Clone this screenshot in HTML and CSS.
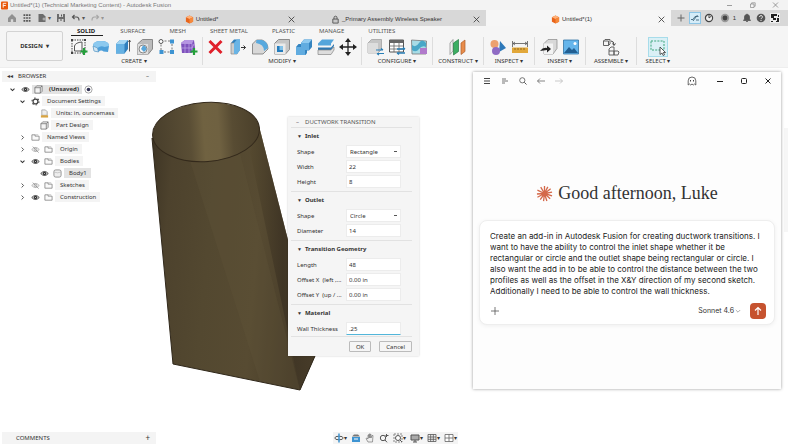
FILE: index.html
```html
<!DOCTYPE html>
<html lang="en">
<head>
  <meta charset="utf-8">
  <meta name="viewport" content="width=device-width,initial-scale=1">
  <title>Untitled*(1) - Autodesk Fusion</title>
  <link rel="stylesheet" href="styles.css">
</head>
<body>
  <!-- shared icons -->
  <svg class="defs" aria-hidden="true">
    <symbol id="close" viewBox="0 0 8 8"><path d="M1.500 1.500l5 5M6.500 1.500l-5 5" fill="none" stroke="currentColor" stroke-width=".7"/></symbol>
    <symbol id="cube" viewBox="0 0 10 10"><path d="M5 .5l4 2v5l-4 2-4-2v-5z" fill="#e8641b"/><path d="M5 .5l4 2-4 2-4-2z" fill="#ffb27a"/><path d="M5 4.500v5l4-2v-5z" fill="#f5893c"/></symbol>
    <symbol id="down" viewBox="0 0 10 10"><path d="M2.800 4L5 6.200 7.200 4" fill="none" stroke="#333" stroke-width="1.200"/></symbol>
    <symbol id="right" viewBox="0 0 10 10"><path d="M4 2.800L6.200 5 4 7.200" fill="none" stroke="#444"/></symbol>
    <symbol id="eye" viewBox="0 0 10 8"><path d="M.8 4Q5-.5 9.200 4 5 8.500.8 4z" fill="#ddd" stroke="#444"/><circle cx="5" cy="4" r="1.900" fill="#333"/><circle cx="5" cy="4" r=".6" fill="#ddd"/></symbol>
    <symbol id="eye-off" viewBox="0 0 10 8"><path d="M.8 4Q5-.5 9.200 4 5 8.500.8 4z" fill="none" stroke="#999" stroke-width=".8"/><circle cx="5" cy="4" r="1.500" fill="none" stroke="#888" stroke-width=".7"/><path d="M2 .8L8.500 7.500" stroke="#888" stroke-width=".8"/></symbol>
    <symbol id="folder" viewBox="0 0 10 8"><path d="M1 7V1h3.500v1.500H9V7z" fill="#fafafa" stroke="#777" stroke-width=".8"/><path d="M4.500 1H8" stroke="#999" stroke-width=".6"/></symbol>
    <symbol id="box" viewBox="0 0 10 10"><path d="M1 3l2-2h6v6L7 9H1zM1 3h6v6M7 3l2-2" fill="#f4f4f4" stroke="#666" stroke-width=".8"/></symbol>
  </svg>

  <header class="titlebar">
    <svg class="app-icon" viewBox="0 0 8 9"><rect width="8" height="9" rx="1" fill="#e8590c"/><path d="M2.500 7V2H6M2.500 4.500h3" stroke="#fff" fill="none"/></svg>
    <span class="app-title">Untitled*(1) (Technical Marketing Content) - Autodesk Fusion</span>
    <div class="window-buttons">
      <button aria-label="Minimize"><svg viewBox="0 0 8 8"><path d="M1.500 4.500h5" stroke="currentColor" stroke-width=".7"/></svg></button>
      <button aria-label="Restore"><svg viewBox="0 0 8 8"><path d="M2 3h3.500v3.500H2zM3.200 3V1.800h3.500v3.400H5.500" fill="none" stroke="currentColor" stroke-width=".6"/></svg></button>
      <button aria-label="Close"><svg><use href="#close"/></svg></button>
    </div>
  </header>

  <div class="tabbar">
    <div class="quick">
      <button aria-label="Home"><svg viewBox="0 0 10 10"><path d="M1 5l4-4 4 4v4H6.200V6.200H3.800V9H1z" fill="#909090"/></svg></button>
      <button aria-label="Data panel"><svg viewBox="0 0 10 10"><path d="M1.500 2.200h7M1.500 5h7M1.500 7.800h7" stroke="#555" stroke-width="1.700" stroke-dasharray="1.800 .8"/></svg></button>
      <button class="wide" aria-label="File"><svg viewBox="0 0 10 10"><path d="M1.500 1h4.500l2.500 2.500V9h-7z" fill="#6c6c6c"/><path d="M5.500 6h3M7 4.500v3" stroke="#ccc" stroke-width=".8"/></svg>▾</button>
      <button aria-label="Save"><svg viewBox="0 0 10 10"><path d="M1 1h8v8H1z" fill="#6c6c6c"/><path d="M3 1h4v3H3zM2.500 6h5v3h-5z" fill="#d5d5d5"/><path d="M5.500 1.500v2M4 7h2" stroke="#555"/></svg></button>
      <button class="wide" aria-label="Undo"><svg viewBox="0 0 10 10"><path d="M3.500 2L1.500 4l2 2M2 4h3.500Q8 4 8 7.500" fill="none" stroke="#555" stroke-width="1.200"/></svg>▾</button>
      <button class="wide faded" aria-label="Redo"><svg viewBox="0 0 10 10"><path d="M6.500 2l2 2-2 2M8 4H4.500Q2 4 2 7.500" fill="none" stroke="#777" stroke-width="1.200"/></svg>▾</button>
    </div>
    <div class="doc-tab"><div class="doc-name"><svg><use href="#cube"/></svg>Untitled*</div><button aria-label="Close tab"><svg><use href="#close"/></svg></button></div>
    <div class="doc-tab"><div class="doc-name"><svg viewBox="0 0 10 10"><path d="M2 4.500h6V9H2zM3.300 4.500V3a1.700 1.700 0 013.400 0v1.500" fill="#c8c8c8" stroke="#555"/></svg>_Primary Assembly Wireless Speaker</div><button aria-label="Close tab"><svg><use href="#close"/></svg></button></div>
    <div class="doc-tab active"><div class="doc-name"><svg><use href="#cube"/></svg>Untitled*(1)</div><button aria-label="Close tab"><svg><use href="#close"/></svg></button></div>
    <div class="status">
      <button aria-label="New tab"><svg viewBox="0 0 10 10"><path d="M5 1.500v7M1.500 5h7" stroke="#666"/></svg></button>
      <button class="on" aria-label="Online"><svg viewBox="0 0 10 10"><path d="M1 6.500h2l2-3h3.500M3 8l4.500-6M6 7h3" fill="none" stroke="#42657a" stroke-width=".9"/></svg></button>
      <button aria-label="Extensions"><svg viewBox="0 0 10 10"><circle cx="5" cy="5" r="3.600" fill="#eee" stroke="#444" stroke-width="1.200"/><path d="M5 5V2M5 5l2.500-2" stroke="#444"/></svg></button>
      <button class="count" aria-label="Jobs"><svg viewBox="0 0 10 10"><circle cx="5" cy="5" r="4.200" fill="#999"/><circle cx="5" cy="5" r="2.400" fill="#444"/></svg>1</button>
      <button aria-label="Notifications"><svg viewBox="0 0 10 10"><path d="M1.500 7.500L2.500 6V4a2.500 2.500 0 015 0v2l1 1.500zM4 8.500h2M5 .7V2" fill="#555" stroke="#555" stroke-width=".8"/></svg></button>
      <button aria-label="Help"><svg viewBox="0 0 10 10"><circle cx="5" cy="5" r="4.300" fill="#555"/><path d="M3.600 4a1.400 1.400 0 112 1.200Q5 5.500 5 6.100M5 7v1" fill="none" stroke="#eee"/></svg></button>
      <button aria-label="Account"><svg viewBox="0 0 10 10"><path d="M0 0h10v10H0z" fill="#eee"/><path d="M1 1h6v2H4v2h2v2H3V5H1zM7 5h2v4H6V8h1zM8 2h1v2H8zM1 8h2v1H1z" fill="#222"/></svg></button>
    </div>
  </div>

  <div class="ribbon">
    <button class="workspace">DESIGN <span>▾</span></button>
    <div class="tools">
      <nav class="ribbon-tabs">
        <a class="current" href="#">SOLID</a><a href="#">SURFACE</a><a href="#">MESH</a><a href="#">SHEET METAL</a><a href="#">PLASTIC</a><a href="#">MANAGE</a><a href="#">UTILITIES</a>
      </nav>
      <div class="groups">
        <div class="group">
          <div class="icons">
            <svg viewBox="0 0 18 18"><path d="M2 2h13v13H2z" fill="#f8f8f8" stroke="#444" stroke-dasharray="1.500 1"/><path d="M4.500 13V8q1-3.500 7.500-4v9z" fill="none" stroke="#555"/><path d="M1 1h2v2H1zM14 1h2v2h-2zM1 14h2v2H1z" fill="#444"/><path d="M14 10v7M10.500 13.500h7" stroke="#23a03a" stroke-width="2.200"/></svg>
            <svg viewBox="0 0 18 18"><path d="M1 8Q1 3 9 3t8 5l-1 6-4.500-.5Q9 11.500 6.500 14L2 13z" fill="#4e9fd9"/><path d="M1 8Q1 3 9 3t8 5l-4.500 1Q9 7 5.500 10z" fill="#8cc9ef"/><path d="M1 8l1 5 4.500 1-1-4z" fill="#d4e6f2" stroke="#5a9ac5" stroke-width=".7"/></svg>
            <svg viewBox="0 0 18 18"><path d="M2 6l4-4h8v9l-3.500 4.500H2z" fill="#2f7fbd"/><path d="M2 6h8.500v9.500H2z" fill="#65b1e3"/><path d="M2 6l4-4h8l-3.500 4z" fill="#a4d6f3"/><path d="M15.500 2.500v11M14.500 4l1-2 1 2" fill="none" stroke="#333" stroke-width=".8"/></svg>
            <svg viewBox="0 0 18 18"><path d="M1.500 6l5-4.500h10V11L12 16.500H1.500z" fill="#bbb" stroke="#888"/><path d="M1.500 6H12v10.500H1.500z" fill="#dedede"/><circle cx="7" cy="11" r="4" fill="#f7f7f7" stroke="#888"/><path d="M7 7.500q3.500.5 3.500 4L8 14l-3-3z" fill="#58a7db"/></svg>
            <svg viewBox="0 0 18 18"><path d="M3 3h11v11H3z" fill="none" stroke="#777" stroke-dasharray="2 1.500"/><circle cx="3" cy="3.500" r="2" fill="#fff" stroke="#555"/><path d="M12 1.500h4v4h-4zM1.500 12h4v4h-4zM12 12h4v4h-4z" fill="#3e94d2"/></svg>
            <svg viewBox="0 0 18 18"><path d="M1 5l4-3h9l1 8-3 5H2z" fill="#7f52bd"/><path d="M1 5l4-3h9l-2 3.500z" fill="#b695e2"/><path d="M1 5.500h11v9M5 5.500V15M9 5.500V15M1.500 10H12l2-4" fill="none" stroke="#c3a9e8" stroke-width=".7"/><path d="M14 10v7M10.500 13.500h7" stroke="#23a03a" stroke-width="2.200"/></svg>
          </div>
          <span>CREATE ▾</span>
        </div>
        <div class="group">
          <div class="icons">
            <svg viewBox="0 0 18 18"><path d="M2.500 3l12 12M14.500 3l-12 12" stroke="#e0202a" stroke-width="3"/></svg>
            <svg viewBox="0 0 18 18"><path d="M2 5l3-3.500h6V12l-3 4H2z" fill="#2f80bd"/><path d="M2 5h6v11H2z" fill="#ccc" stroke="#888" stroke-width=".7"/><path d="M5 5l3-3.500h3V12l-3 4H5z" fill="#69b4e5"/><path d="M12 9.500h4.500M14.500 7.500l2 2-2 2" fill="none" stroke="#333"/></svg>
            <svg viewBox="0 0 18 18"><path d="M1.500 6l4-4H11q6 2 6 9l-5 5H1.500z" fill="#d8d8d8" stroke="#777" stroke-width=".8"/><path d="M5.500 2H11q6 2 6 8l-4 3Q13 6 5 5z" fill="#58a9de"/></svg>
            <svg viewBox="0 0 18 18"><path d="M1.500 5.500l4-4h11v10l-4 4.500h-11z" fill="#c6c6c6" stroke="#777" stroke-width=".8"/><path d="M1.500 5.500h11V16h-11z" fill="#eaeaea"/><path d="M4 8h6v6H4z" fill="#83c2e9"/><path d="M4 8h2.500v4H10v2H4z" fill="#267dbd"/></svg>
            <svg viewBox="0 0 18 18"><path d="M6 5l3-3.500h8V9l-3 3.500h-2V15l-1.500 2H1V9l2.500-3H6z" fill="#3484c0"/><path d="M1 9h5V5h8v7h-4v5H1z" fill="#61ace0"/><path d="M6 5l3-3.500h8L14 5z" fill="#8fcaf0"/></svg>
            <svg viewBox="0 0 18 18"><path d="M1 5.500l4-4h12l-3 4v2H1z" fill="#54a5db"/><path d="M1 9.500h13L17 6v2l-3 4H1z" fill="#2f78b1"/><path d="M1 12h13l3-3v3l-3 4.500H1z" fill="#ddd" stroke="#888" stroke-width=".7"/></svg>
            <svg viewBox="0 0 18 18"><path d="M9 2v14M2 9h14" stroke="#222" stroke-width="1.300"/><path d="M9 0l3 4H6zM9 18l3-4H6zM0 9l4-3v6zM18 9l-4-3v6z" fill="#222"/></svg>
          </div>
          <span>MODIFY ▾</span>
        </div>
        <div class="group">
          <div class="icons">
            <svg viewBox="0 0 18 18"><path d="M2 5l3.500-3.500h10v10L12 15H2z" fill="#c5c5c5" stroke="#999" stroke-width=".7"/><path d="M2 5h10v10H2z" fill="#ddd"/><path d="M10 12h7M15 10.500l2 1.500M18 15.500h-7M13 17l-2-1.500" stroke="#287fb7" stroke-width="1.200"/></svg>
            <svg viewBox="0 0 18 18"><path d="M1.500 2h14v12h-14z" fill="#fff" stroke="#555"/><path d="M1.500 2h14v3h-14z" fill="#666"/><path d="M1.500 8h14M1.500 11h14M6 5v9M11 5v9" stroke="#666" stroke-width=".8"/><path d="M9 11h8M15 9.500l2 1.500M17 15H9M11 16.500L9 15" stroke="#287fb7" stroke-width="1.300"/></svg>
            <svg viewBox="0 0 18 18"><path d="M1.500 2l15 1-.5 13H2z" fill="#a7dce6" stroke="#777" stroke-width=".8"/><path d="M2 7q4 3 7-2t7 0v4q-4-2-7 2t-7 1z" fill="#49a7c7"/><path d="M10 10h7v6h-7z" fill="#b17acb"/></svg>
          </div>
          <span>CONFIGURE ▾</span>
        </div>
        <div class="group">
          <div class="icons">
            <svg viewBox="0 0 18 18"><path d="M1 5l3-3.500V13l-3 3.500z" fill="#eee" stroke="#888" stroke-width=".7"/><path d="M4.500 5l5-3.500v12l-5 3.500z" fill="#3cae63" stroke="#257b43" stroke-width=".7"/><path d="M12 5l4-3v11.500L12 16.500z" fill="#e98c4a" stroke="#ae5f2b" stroke-width=".7"/></svg>
          </div>
          <span>CONSTRUCT ▾</span>
        </div>
        <div class="group">
          <div class="icons">
            <svg viewBox="0 0 18 18"><path d="M11 3l6 7-7 4z" fill="#2d78b9"/><circle cx="5.500" cy="6" r="4" fill="#eda16f"/><circle cx="7" cy="13" r="4" fill="#8f6bc4"/></svg>
            <svg viewBox="0 0 18 18"><path d="M1.500 3v6M16.500 3v6M2 5.500h14M4 4L2 5.500 4 7M14 4l2 1.500L14 7" fill="none" stroke="#555" stroke-width=".8"/><path d="M1 9.500h16V15H1z" fill="#e2a83a"/><path d="M4 10v2M7 10v2M10 10v2M13 10v2" stroke="#7f5b1c" stroke-width=".8"/></svg>
          </div>
          <span>INSPECT ▾</span>
        </div>
        <div class="group">
          <div class="icons">
            <svg viewBox="0 0 18 18"><path d="M4 5.500l4-4h9v9L13 16H4z" fill="#d8d8d8" stroke="#888" stroke-width=".7"/><path d="M4 5.500h9V16H4z" fill="#f3f3f3"/><path d="M0 13q3-4 7-3V7.500l4 3.500-4 3.500V12z" fill="#222"/></svg>
            <svg viewBox="0 0 18 18"><path d="M1.500 2h15v14h-15z" fill="#65b5eb" stroke="#3274a5" stroke-width=".8"/><path d="M2 15l5-6 3 3 2-2 4 5z" fill="#225f92"/><circle cx="13" cy="5.500" r="1.500" fill="#fff"/></svg>
          </div>
          <span>INSERT ▾</span>
        </div>
        <div class="group">
          <div class="icons">
            <svg viewBox="0 0 18 18"><path d="M1.500 3l1.500-1.500h5V6L6.500 7.500h-5zM1.500 3h5v4.500M7 11l2-2h3v4h4l1 1-1 3H7zM7 13h5v4M12 13v4" fill="#f5f5f5" stroke="#555" stroke-width=".9"/><path d="M9 3q3 0 3 4M10.500 5.500L12 7.500l1.500-2" fill="none" stroke="#444"/></svg>
          </div>
          <span>ASSEMBLE ▾</span>
        </div>
        <div class="group">
          <div class="icons">
            <svg class="selected" viewBox="0 0 18 18"><path d="M2 3h13v9H2z" fill="none" stroke="#3ca57c" stroke-dasharray="2 1.200"/><path d="M11 9v7.500l2-1.500 1.200 2.500 1.300-.7-1.200-2.300h2.200z" fill="#fff" stroke="#333" stroke-width=".8"/></svg>
          </div>
          <span>SELECT ▾</span>
        </div>
      </div>
    </div>
  </div>

  <main class="canvas">
    <!-- duct model -->
    <svg class="model" viewBox="150 100 170 292" role="img" aria-label="Duct body">
      <defs>
        <linearGradient id="wall" x1="0" y1="0" x2="1" y2=".15">
          <stop offset="0" stop-color="#3d3424"/><stop offset=".14" stop-color="#4d422d"/><stop offset=".4" stop-color="#534830"/><stop offset=".7" stop-color="#574b32"/><stop offset="1" stop-color="#463b28"/>
        </linearGradient>
        <linearGradient id="inside">
          <stop offset="0" stop-color="#483e2b"/><stop offset=".35" stop-color="#5a4e35"/><stop offset=".48" stop-color="#706241"/><stop offset=".62" stop-color="#6f6141"/><stop offset=".75" stop-color="#584c33"/><stop offset="1" stop-color="#4a3f2a"/>
        </linearGradient>
        <linearGradient id="side" x1="0" y1="0" x2="1" y2="0">
          <stop offset="0" stop-color="#55492f"/><stop offset=".5" stop-color="#3c3223"/><stop offset="1" stop-color="#473c29"/>
        </linearGradient>
      </defs>
      <path d="M152 138L173 364l127 26 15-34-27-116-29-114z" fill="url(#wall)"/>
      <path d="M190 161l50-8 60 237-40-8z" fill="#65583a" opacity=".25"/>
      <path d="M250 152l9-26 29 114 27 116-15 34z" fill="url(#side)" opacity=".8"/>
      <path d="M152 138L173 364l127 26 15-34" fill="none" stroke="#30281b"/>
      <ellipse cx="206" cy="132" rx="53.500" ry="29.500" transform="rotate(-4 206 132)" fill="url(#inside)" stroke="#33291b"/>
    </svg>

    <section class="browser">
      <h2><span>◂◂</span>BROWSER<span class="end">–</span></h2>
      <ul class="tree">
        <li class="l0"><svg><use href="#down"/></svg><svg><use href="#eye"/></svg><span class="root"><svg><use href="#box"/></svg><b>(Unsaved)</b></span><svg viewBox="0 0 10 10"><circle cx="5" cy="5" r="4" fill="#fff" stroke="#777" stroke-width=".7"/><circle cx="5" cy="5" r="2" fill="#335"/></svg></li>
        <li class="l1"><svg><use href="#down"/></svg><svg viewBox="0 0 10 10"><circle cx="5" cy="5" r="2.700" fill="none" stroke="#444" stroke-width="1.400"/><circle cx="5" cy="5" r="3.900" fill="none" stroke="#444" stroke-width="1.200" stroke-dasharray="1.700 2.380"/></svg><span>Document Settings</span></li>
        <li class="l2"><svg viewBox="0 0 10 10"><path d="M2 7V1h4l2 2v4z" fill="#eee" stroke="#888" stroke-width=".7"/><path d="M1 7h8v2.500H1z" fill="#d9a441"/></svg><span>Units: in, ouncemass</span></li>
        <li class="l2"><svg><use href="#box"/></svg><span>Part Design</span></li>
        <li class="l1"><svg><use href="#right"/></svg><svg><use href="#folder"/></svg><span>Named Views</span></li>
        <li class="l1"><svg><use href="#right"/></svg><svg><use href="#eye-off"/></svg><svg><use href="#folder"/></svg><span>Origin</span></li>
        <li class="l1"><svg><use href="#down"/></svg><svg><use href="#eye"/></svg><svg><use href="#folder"/></svg><span>Bodies</span></li>
        <li class="l2"><svg><use href="#eye"/></svg><svg viewBox="0 0 10 10"><rect x="1" y="1" width="8" height="8" rx="2" fill="#eee" stroke="#777" stroke-width=".8"/><path d="M1.500 3.500Q5 5 8.500 3.500" fill="none" stroke="#aaa" stroke-width=".6"/></svg><span class="hit">Body1</span></li>
        <li class="l1"><svg><use href="#right"/></svg><svg><use href="#eye-off"/></svg><svg><use href="#folder"/></svg><span>Sketches</span></li>
        <li class="l1"><svg><use href="#right"/></svg><svg><use href="#eye"/></svg><svg><use href="#folder"/></svg><span>Construction</span></li>
      </ul>
    </section>

    <form class="dialog">
      <h2><span>–</span>DUCTWORK TRANSITION</h2>
      <fieldset>
        <legend>Inlet</legend>
        <div class="field"><label for="in-shape">Shape</label><select id="in-shape"><option>Rectangle</option><option>Circle</option></select></div>
        <div class="field"><label for="in-width">Width</label><input id="in-width" type="text" value="22"></div>
        <div class="field"><label for="in-height">Height</label><input id="in-height" type="text" value="8"></div>
      </fieldset>
      <fieldset>
        <legend>Outlet</legend>
        <div class="field"><label for="out-shape">Shape</label><select id="out-shape"><option>Circle</option><option>Rectangle</option></select></div>
        <div class="field"><label for="out-dia">Diameter</label><input id="out-dia" type="text" value="14"></div>
      </fieldset>
      <fieldset>
        <legend>Transition Geometry</legend>
        <div class="field"><label for="len">Length</label><input id="len" type="text" value="48"></div>
        <div class="field"><label for="off-x">Offset X &nbsp;(left ,...</label><input id="off-x" type="text" value="0.00 in"></div>
        <div class="field"><label for="off-y">Offset Y &nbsp;(up / ...</label><input id="off-y" type="text" value="0.00 in"></div>
      </fieldset>
      <fieldset>
        <legend>Material</legend>
        <div class="field"><label for="wall-t">Wall Thickness</label><input id="wall-t" class="editing" type="text" value=".25"></div>
      </fieldset>
      <div class="actions"><button type="button">OK</button><button type="button">Cancel</button></div>
    </form>

    <div class="side-edge"></div>

    <section class="chat">
      <div class="chat-bar">
        <button aria-label="Menu"><svg viewBox="0 0 10 10"><path d="M2 2.500h6M2 5h6M2 7.500h6" stroke="#444"/></svg></button>
        <button aria-label="Sidebar"><svg viewBox="0 0 10 10"><path d="M2 3h4M2 5h6M2 7h3" stroke="#666" stroke-width=".9"/></svg></button>
        <button aria-label="Search"><svg viewBox="0 0 10 10"><circle cx="4.300" cy="4.300" r="2.600" fill="none" stroke="#555" stroke-width=".8"/><path d="M6.300 6.300L8.500 8.500" stroke="#555"/></svg></button>
        <button aria-label="Back"><svg viewBox="0 0 10 10"><path d="M9 5H1.500M4 2.500L1.500 5 4 7.500" fill="none" stroke="#666" stroke-width=".8"/></svg></button>
        <button aria-label="Forward"><svg viewBox="0 0 10 10"><path d="M1 5h7.500M6 2.500L8.500 5 6 7.500" fill="none" stroke="#bbb" stroke-width=".8"/></svg></button>
        <span class="spacer"></span>
        <button aria-label="Incognito"><svg viewBox="0 0 10 10"><path d="M1.200 9V4.800a3.800 3.800 0 017.600 0V9L7.500 8 6.300 9 5 8 3.700 9 2.500 8z" fill="none" stroke="#444" stroke-width=".8"/><path d="M3.500 4v1.500M6.500 4v1.500" stroke="#444"/></svg></button>
        <div class="chat-window">
          <button aria-label="Minimize"><svg viewBox="0 0 10 10"><path d="M2 5.500h6" stroke="#222"/></svg></button>
          <button aria-label="Maximize"><svg viewBox="0 0 10 10"><rect x="2.500" y="2.500" width="5" height="5" rx="1" fill="none" stroke="#222"/></svg></button>
          <button aria-label="Close"><svg viewBox="0 0 10 10"><path d="M2.500 2.500l5 5M7.500 2.500l-5 5" stroke="#222"/></svg></button>
        </div>
      </div>
      <h1>
        <svg viewBox="0 0 18 18"><path d="M9 9V1M9 9l3.500-7M9 9l6.500-5M9 9l8-1.500M9 9l8 2.500M9 9l6 5.500M9 9l2.500 8M9 9l-1 8M9 9l-4.500 6.500M9 9l-7.500 4M9 9L1 9.500M9 9L1.500 5.500M9 9L5 2.200" stroke="#d4694a" stroke-width="1.400"/></svg>
        Good afternoon, Luke
      </h1>
      <form class="composer">
        <textarea aria-label="Message" rows="6" spellcheck="false">Create an add-in in Autodesk Fusion for creating ductwork transitions. I
want to have the ability to control the inlet shape whether it be
rectangular or circle and the outlet shape being rectangular or circle. I
also want the add in to be able to control the distance between the two
profiles as well as the offset in the X&amp;Y direction of my second sketch.
Additionally I need to be able to control the wall thickness.</textarea>
        <div class="composer-row">
          <button type="button" aria-label="Attach"><svg viewBox="0 0 10 10"><path d="M5 1v8M1 5h8" stroke="#555" stroke-width=".8"/></svg></button>
          <span class="spacer"></span>
          <button type="button" class="pick">Sonnet 4.6<svg viewBox="0 0 8 8"><path d="M1.800 3L4 5.200 6.200 3" fill="none" stroke="#999" stroke-width=".8"/></svg></button>
          <button type="button" class="send" aria-label="Send"><svg viewBox="0 0 10 10"><path d="M5 9V1.500M2 4.500l3-3 3 3" fill="none" stroke="#fff" stroke-width="1.200"/></svg></button>
        </div>
      </form>
    </section>
  </main>

  <footer class="bottom">
    <div class="comments">COMMENTS<button aria-label="Add comment">+</button></div>
    <div class="nav-tools">
      <button aria-label="Orbit"><svg viewBox="0 0 10 10"><ellipse cx="5" cy="5" rx="4.200" ry="1.800" fill="none" stroke="#555"/><path d="M5 .5v9" stroke="#3e94d2" stroke-width="1.500"/></svg>▾</button>
      <button aria-label="Look at"><svg viewBox="0 0 10 10"><path d="M1 4h8v5H1z" fill="#3e94d2"/><path d="M1 3.500l2-2h4l2 2z" fill="#777"/><path d="M3 6h4" stroke="#fff"/></svg></button>
      <button aria-label="Pan"><svg viewBox="0 0 10 10"><path d="M3 9L1 5.500l1-.5 1 1V2h1v3V1h1v4V1.300h1V5l1-2.500h1L7.500 9z" fill="#eee" stroke="#777" stroke-width=".7"/></svg></button>
      <button aria-label="Zoom"><svg viewBox="0 0 10 10"><circle cx="4" cy="5" r="2.700" fill="none" stroke="#555"/><path d="M6 7l2 2.300M7.500 1v3M6.500 2.500h3" stroke="#555"/></svg></button>
      <button aria-label="Fit"><svg viewBox="0 0 10 10"><path d="M1 1h8v8H1z" fill="none" stroke="#888" stroke-dasharray="2 1"/><circle cx="5" cy="5" r="2.500" fill="#fff" stroke="#555"/><path d="M7 7l2 2" stroke="#555"/></svg>▾</button>
      <button aria-label="Display"><svg viewBox="0 0 10 10"><path d="M1 2h8v5H1z" fill="#aaa" stroke="#555"/><path d="M3 9h4M5 7v2" stroke="#555"/></svg>▾</button>
      <button aria-label="Grid"><svg viewBox="0 0 10 10"><path d="M1 1.500h8v7H1zM1 4h8M1 6.300h8M3.700 1.500v7M6.300 1.500v7" fill="none" stroke="#555" stroke-width=".8"/></svg>▾</button>
      <button aria-label="Viewports"><svg viewBox="0 0 10 10"><path d="M1 1.500h8v7H1zM1 5h8M5 1.500v7" fill="#fff" stroke="#666" stroke-width=".8"/></svg>▾</button>
    </div>
  </footer>
</body>
</html>
```
FILE: styles.css
```css
* {
  box-sizing: border-box;
}

html,
body {
  height: 100%;
}

body {
  display: flex;
  flex-direction: column;
  margin: 0;
  overflow: hidden;
  background: #fff;
  color: #333;
  font: 6px/8px "Noto Sans", "Open Sans", sans-serif;
}

button {
  display: flex;
  align-items: center;
  justify-content: center;
  padding: 0;
  border: 0;
  background: none;
  color: inherit;
  font: inherit;
}

svg {
  display: block;
  flex: none;
  width: 10px;
  height: 10px;
}

h1,
h2 {
  margin: 0;
  font-weight: normal;
}

.defs {
  position: absolute;
  width: 0;
  height: 0;
}

.spacer {
  flex: 1;
}

/* title bar */
.titlebar {
  display: flex;
  align-items: center;
  gap: 2px;
  height: 10px;
  padding: 0 8px 0 1px;
  background: #f3f3f3;
  color: #777;
  font-family: "Liberation Sans", Arial, sans-serif;
}

.titlebar .app-icon {
  width: 7px;
  height: 9px;
}

.window-buttons {
  display: flex;
  gap: 14px;
  margin-left: auto;
}

.window-buttons svg {
  width: 9px;
  height: 8px;
}

/* document tabs */
.tabbar {
  display: flex;
  height: 16px;
  background: #d8d8d8;
  font-family: "Liberation Sans", Arial, sans-serif;
}

.quick {
  display: flex;
  align-items: center;
  gap: 5px;
  width: 116px;
  padding-left: 7px;
}

.quick .wide {
  gap: 1px;
  color: #555;
}

.quick .faded {
  opacity: .5;
}

.doc-tab {
  display: flex;
  flex: 1;
  align-items: center;
  padding: 2px 5px 0 0;
}

.doc-tab.active {
  background: #f6f6f6;
}

.doc-name {
  display: flex;
  flex: 1;
  align-items: center;
  justify-content: center;
  gap: 2px;
}

.doc-tab svg {
  width: 9px;
  height: 9px;
}

.status {
  display: flex;
  align-items: center;
  gap: 2px;
  width: 117px;
  padding-left: 4px;
}

.status button {
  width: 12px;
  height: 12px;
}

.status .on {
  border: 1px solid #8cc5e6;
  background: #d5ecf8;
}

.status .count {
  gap: 3px;
  width: 22px;
}

/* ribbon */
.ribbon {
  display: flex;
  height: 42px;
  border-bottom: 1px solid #eee;
  background: #f5f5f5;
}

.workspace {
  width: 57px;
  height: 30px;
  margin: 5px 3px 0 6px;
  border: 1px solid #d3d3d3;
  border-radius: 2px;
  font-weight: bold;
}

.workspace span {
  margin-left: 3px;
}

.ribbon-tabs {
  display: flex;
  gap: 24px;
  height: 10px;
  padding-left: 5px;
}

.ribbon-tabs a {
  padding-top: 1px;
  color: #555;
  text-decoration: none;
}

.ribbon-tabs .current {
  margin-right: -7px;
  padding: 1px 8px 0 6px;
  border-bottom: 1px solid #222;
  color: #222;
  font-weight: bold;
}

.groups {
  display: flex;
  padding-top: 1px;
}

.group {
  display: flex;
  flex-direction: column;
  align-items: center;
  min-width: 51px;
  padding: 0 4px;
  border-right: 1px solid #ddd;
}

.group:last-child {
  min-width: 42px;
  border: 0;
}

.icons {
  display: flex;
  gap: 4px;
}

.icons svg {
  width: 18px;
  height: 20px;
}

.icons .selected {
  width: 20px;
  border: 1px solid #a7dcea;
  background: #daf0f6;
}

/* canvas */
.canvas {
  position: relative;
  flex: 1;
}

.model {
  position: absolute;
  top: 32px;
  left: 150px;
  width: 170px;
  height: 292px;
}

.side-edge {
  position: absolute;
  top: 60px;
  right: 0;
  width: 4px;
  height: 104px;
  background: #f6f6f6;
}

.browser {
  width: 154px;
  margin: 3px 0 0 2px;
}

.browser h2 {
  display: flex;
  gap: 5px;
  height: 11px;
  padding: 1px 7px 0 5px;
  background: #f4f4f4;
  font-size: 6px;
  line-height: 9px;
}

.browser .end {
  margin-left: auto;
}

.tree {
  margin: 1px 0 0;
  padding: 0;
  list-style: none;
}

.tree li {
  display: flex;
  align-items: center;
  height: 12px;
}

.tree svg {
  width: 9px;
  height: 9px;
  margin: 0 2px;
}

.tree .l0 {
  padding-left: 4px;
}

.tree .l1 {
  padding-left: 14px;
}

.tree .l2 {
  padding-left: 36px;
}

.tree li > span {
  padding: 1px 4px 1px 5px;
  background: #f4f4f4;
}

.tree li > .root {
  display: flex;
  align-items: center;
  gap: 4px;
  padding: 0 3px 0 0;
  background: #e3e3e3;
}

.tree li > .hit {
  background: #e3e3e3;
}

/* add-in dialog */
.dialog {
  position: absolute;
  top: 49px;
  left: 288px;
  width: 131px;
  padding: 0 7px 4px 3px;
  background: #f5f5f5;
  box-shadow: 0 0 2px rgba(0, 0, 0, .2);
}

.dialog h2 {
  display: flex;
  gap: 6px;
  height: 10px;
  padding-left: 5px;
  color: #555;
  font-size: 6px;
  line-height: 11px;
}

.dialog fieldset {
  margin: 0;
  padding: 2px 11px 2px 6px;
  border: 0;
  border-top: 1px solid #e2e2e2;
}

.dialog fieldset:last-of-type {
  padding-bottom: 0;
}

.dialog legend {
  float: left;
  width: 100%;
  height: 14px;
  padding: 0;
  font-weight: bold;
  line-height: 13px;
}

.dialog legend::before {
  content: "▼";
  margin-right: 3px;
  font-size: 5px;
}

.field {
  display: flex;
  clear: both;
  align-items: center;
  justify-content: space-between;
  height: 15px;
}

.field label {
  white-space: nowrap;
}

.field input,
.field select {
  width: 55px;
  height: 13px;
  padding: 0 2px;
  border: 1px solid #ececec;
  border-radius: 0;
  outline: 0;
  background: #fff;
  color: #333;
  font: inherit;
}

.field select {
  padding: 0 3px;
  appearance: none;
  background: linear-gradient(#555, #555) no-repeat right 3px center / 3px 1px, #fff;
}

.field .editing {
  border-bottom-color: #52b6da;
}

.actions {
  display: flex;
  justify-content: flex-end;
  gap: 8px;
  padding-top: 4px;
  border-top: 1px solid #e2e2e2;
}

.actions button {
  height: 11px;
  padding: 0 6px;
  border: 1px solid #bbb;
  border-radius: 1px;
}

/* chat window */
.chat {
  position: absolute;
  top: 4px;
  right: 7px;
  width: 308px;
  height: 317px;
  padding: 0 6px;
  background: #fdfdfd;
  box-shadow: 0 0 3px rgba(0, 0, 0, .4);
}

.chat-bar {
  display: flex;
  align-items: center;
  gap: 8px;
  height: 18px;
  padding: 0 2px 0 3px;
}

.chat-window {
  display: flex;
  gap: 14px;
  margin-left: 10px;
}

.chat h1 {
  display: flex;
  align-items: center;
  justify-content: center;
  gap: 5px;
  padding-top: 91px;
  color: #333;
  font: 18px/24px "Liberation Serif", serif;
}

.chat h1 svg {
  width: 17px;
  height: 17px;
}

.composer {
  margin-top: 15px;
  padding: 10px 8px 5px 10px;
  border: 1px solid #eee;
  border-radius: 8px;
  background: #fff;
  box-shadow: 0 1px 4px rgba(0, 0, 0, .06);
}

.composer textarea {
  display: block;
  width: 100%;
  height: 66px;
  padding: 0;
  border: 0;
  outline: 0;
  resize: none;
  overflow: hidden;
  background: none;
  color: #222;
  font: 8px/11px Inter, "Noto Sans", sans-serif;
  white-space: pre;
}

.composer-row {
  display: flex;
  align-items: center;
  height: 17px;
  margin-top: 5px;
}

.composer .pick {
  margin-right: 8px;
  font: 7px/10px Inter, "Noto Sans", sans-serif;
}

.pick svg {
  width: 8px;
  height: 8px;
}

.composer .send {
  width: 16px;
  height: 16px;
  border-radius: 4px;
  background: #c6532f;
}

/* bottom bar */
.bottom {
  display: flex;
  gap: 177px;
  height: 12px;
  padding-left: 2px;
}

.comments {
  display: flex;
  align-items: center;
  justify-content: space-between;
  width: 154px;
  padding: 0 6px 0 14px;
  background: #f4f4f4;
}

.comments button {
  font-size: 8px;
}

.nav-tools {
  display: flex;
  align-items: center;
  gap: 4px;
  padding: 0 1px;
  background: #f4f4f4;
}
```
